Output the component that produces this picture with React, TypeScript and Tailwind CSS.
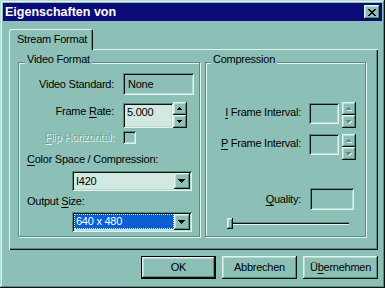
import type { ReactNode } from 'react';

const raised =
  '[box-shadow:inset_-1px_-1px_0_#0b120f,inset_1px_1px_0_#e2f4ef,inset_-2px_-2px_0_#5b8a80,inset_2px_2px_0_#b5dbd2]';
const sunken =
  '[box-shadow:inset_1px_1px_0_#5b8a80,inset_-1px_-1px_0_#e2f4ef,inset_2px_2px_0_#0b120f,inset_-2px_-2px_0_#b5dbd2]';
const etched = '[box-shadow:inset_1px_1px_0_#e2f4ef,1px_1px_0_#e2f4ef]';

function Tri({ w, up, disabled }: { w: number; up?: boolean; disabled?: boolean }) {
  const rows = Math.ceil(w / 2);
  const rects = Array.from({ length: rows }, (_, i) => ({
    x: i,
    y: up ? rows - 1 - i : i,
    width: w - 2 * i,
  }));
  return (
    <svg width={w + 1} height={rows + 1} shapeRendering="crispEdges">
      {disabled &&
        rects.map((r) => (
          <rect key={'s' + r.y} x={r.x + 1} y={r.y + 1} width={r.width} height={1} fill="#e2f4ef" />
        ))}
      {rects.map((r) => (
        <rect key={r.y} x={r.x} y={r.y} width={r.width} height={1} fill={disabled ? '#5b8a80' : '#000'} />
      ))}
    </svg>
  );
}

function Spin({ disabled }: { disabled?: boolean }) {
  return (
    <div className="flex flex-col w-[14px]">
      <div className={`h-[13px] flex items-center justify-center bg-[#8cc0b6] ${raised}`}>
        <Tri w={5} up disabled={disabled} />
      </div>
      <div className={`h-[13px] flex items-center justify-center bg-[#8cc0b6] ${raised}`}>
        <Tri w={5} disabled={disabled} />
      </div>
    </div>
  );
}

function U({ children }: { children: ReactNode }) {
  return <span className="underline underline-offset-[2px]">{children}</span>;
}

function Combo({ children }: { children: ReactNode }) {
  return (
    <div className={`ml-[53px] w-[120px] h-[20px] bg-[#d2e9e1] flex items-center p-[2px] ${sunken}`}>
      <div className="flex-1 h-full flex items-center">{children}</div>
      <div className={`w-[16px] h-[16px] bg-[#8cc0b6] flex items-center justify-center ${raised}`}>
        <Tri w={7} />
      </div>
    </div>
  );
}

function Button({ children, primary }: { children: ReactNode; primary?: boolean }) {
  return (
    <div
      className={`w-[75px] h-[23px] flex items-center justify-center bg-[#8cc0b6] ${
        primary ? 'border border-black' : ''
      } ${raised}`}
    >
      {children}
    </div>
  );
}

export default function App() {
  return (
    <div className="w-[385px] h-[288px] bg-[#8cc0b6] flex flex-col px-[3px] pt-[3px] font-['Liberation_Sans',Arial,sans-serif] text-[11px] text-black [box-shadow:inset_-1px_-1px_0_#0b120f,inset_1px_1px_0_#b5dbd2,inset_-2px_-2px_0_#5b8a80,inset_2px_2px_0_#e2f4ef]">
      <div className="h-[18px] bg-[#0b0b7a] flex items-center justify-between pl-[2px] pr-[2px]">
        <span className="text-white font-bold text-[12.5px] leading-none">Eigenschaften von</span>
        <div className={`w-[16px] h-[14px] bg-[#8cc0b6] flex items-center justify-center ${raised}`}>
          <svg width="8" height="7" viewBox="0 0 8 7" shapeRendering="crispEdges">
            <path d="M0 0h2v1h-2zM6 0h2v1h-2zM1 1h2v1h-2zM5 1h2v1h-2zM2 2h4v1h-4zM3 3h2v1h-2zM2 4h4v1h-4zM1 5h2v1h-2zM5 5h2v1h-2zM0 6h2v1h-2zM6 6h2v1h-2z" fill="#000" />
          </svg>
        </div>
      </div>

      <div className="pl-[6px] flex flex-col tracking-[-0.25px]">
        <div className="mt-[8px] relative z-10 -mb-[1px] w-[84px] h-[21px] bg-[#8cc0b6] flex items-center pl-[8px] pb-[1px] rounded-tl-[2px] rounded-tr-[2px] [box-shadow:inset_1px_1px_0_#e2f4ef,inset_-1px_0_0_#0b120f,inset_-2px_0_0_#5b8a80]">
          Stream Format
        </div>

        <div className="w-[369px] h-[201px] flex gap-[5px] pl-[9px] pt-[13px] [box-shadow:inset_1px_1px_0_#e2f4ef,inset_-1px_-1px_0_#0b120f,inset_-2px_-2px_0_#5b8a80]">
          {/* Video Format */}
          <div className={`relative w-[182px] h-[175px] border border-[#5b8a80] flex flex-col ${etched}`}>
            <span className="absolute -top-[11px] left-[6px] px-[2px] bg-[#8cc0b6] leading-[14px]">Video Format</span>

            <div className="mt-[10px] h-[22px] flex items-center">
              <span className="w-[95px] text-right">Video Standard:</span>
              <div className={`ml-[9px] w-[71px] h-[22px] flex items-center pl-[5px] ${sunken}`}>None</div>
            </div>

            <div className="mt-[7px] h-[26px] flex items-start">
              <span className="w-[95px] text-right mt-[2px] leading-[14px]">
                Frame <U>R</U>ate:
              </span>
              <div className={`ml-[9px] mt-[1px] w-[50px] h-[25px] bg-[#d2e9e1] pl-[4px] pt-[2px] leading-[14px] ${sunken}`}>
                5.000
              </div>
              <Spin />
            </div>

            <div className="mt-[3px] h-[13px] flex items-center">
              <span className="w-[95px] text-right text-[#76a59b] [text-shadow:1px_1px_0_#e2f4ef]">
                <U>F</U>lip Horizontal:
              </span>
              <div className={`ml-[9px] w-[13px] h-[13px] ${sunken}`} />
            </div>

            <div className="mt-[8px] h-[14px] leading-[14px] pl-[8px]">
              <U>C</U>olor Space / Compression:
            </div>

            <div className="mt-[5px]">
              <Combo>
                <span className="pl-[2px]">I420</span>
              </Combo>
            </div>

            <div className="mt-[3px] h-[14px] leading-[14px] pl-[8px]">
              Output <U>S</U>ize:
            </div>

            <div className="mt-[4px]">
              <Combo>
                <div className="w-[100px] h-[15px] -mt-[1px] bg-[#0a5fd4] text-white flex items-center pl-[2px] outline outline-1 outline-dotted outline-[#e8e4a0] -outline-offset-1">
                  640 x 480
                </div>
              </Combo>
            </div>
          </div>

          {/* Compression */}
          <div className={`relative w-[161px] h-[175px] border border-[#5b8a80] flex flex-col ${etched}`}>
            <span className="absolute -top-[11px] left-[5px] px-[2px] bg-[#8cc0b6] leading-[14px]">Compression</span>

            <div className="mt-[39px] h-[27px] flex items-start">
              <span className="w-[97px] text-right pr-[2px] mt-[3px] leading-[14px]">
                <U>I</U> Frame Interval:
              </span>
              <div className={`ml-[6px] mt-[1px] w-[30px] h-[21px] ${sunken}`} />
              <div className="ml-[3px]">
                <Spin disabled />
              </div>
            </div>

            <div className="mt-[5px] h-[26px] flex items-start">
              <span className="w-[97px] text-right pr-[2px] mt-[2px] leading-[14px]">
                <U>P</U> Frame Interval:
              </span>
              <div className={`ml-[6px] w-[30px] h-[21px] ${sunken}`} />
              <div className="ml-[3px]">
                <Spin disabled />
              </div>
            </div>

            <div className="mt-[28px] h-[22px] flex items-center">
              <span className="w-[97px] text-right pr-[2px]">
                <U>Q</U>uality:
              </span>
              <div className={`ml-[7px] w-[44px] h-[22px] ${sunken}`} />
            </div>

            <div className="mt-[7px] ml-[21px] relative w-[122px] h-[12px] flex items-center">
              <div className="w-full h-[3px] bg-[#0b120f] border-t border-t-[#5b8a80] border-b border-b-[#e2f4ef]" />
              <div className={`absolute left-0 top-[1px] w-[6px] h-[11px] bg-[#8cc0b6] ${raised}`} />
            </div>
          </div>
        </div>

        <div className="mt-[6px] flex justify-end gap-[6px] pr-[4px]">
          <Button primary>OK</Button>
          <Button>Abbrechen</Button>
          <Button>
            <span>
              Ü<U>b</U>ernehmen
            </span>
          </Button>
        </div>
      </div>
    </div>
  );
}
